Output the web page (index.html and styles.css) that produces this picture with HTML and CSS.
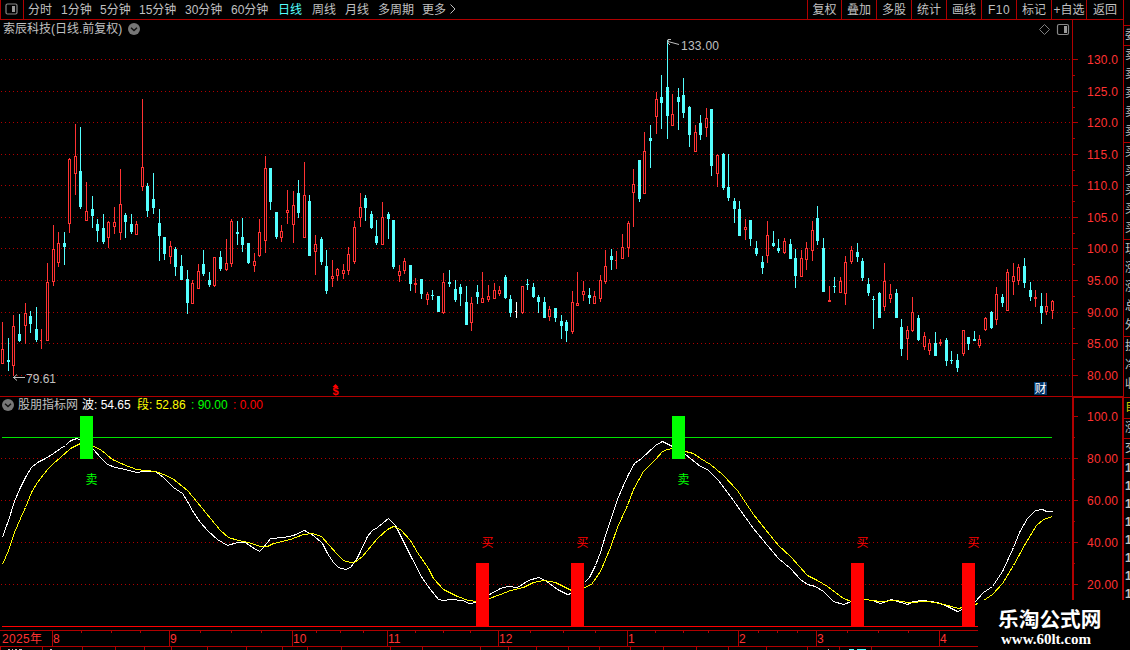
FILE: index.html
```html
<!DOCTYPE html>
<html lang="zh-CN">
<head>
    <meta charset="UTF-8">
    <meta name="viewport" content="width=device-width, initial-scale=1.0">
    <title>索辰科技 日线</title>
    <link rel="stylesheet" href="styles.css">
</head>
<body>
    <div class="terminal">
        <div class="main">
            <div class="toolbar">
                <div class="layout-btn">
                    <svg width="13" height="12" viewBox="0 0 13 12"><rect x="1" y="1" width="11" height="10" rx="1.5" fill="none" stroke="#888" stroke-width="1.2"/><rect x="7" y="3" width="3" height="6" fill="#999"/></svg>
                </div>
                <div class="periods">
                    <span class="w33">分时</span>
                    <span class="w39">1分钟</span>
                    <span class="w39">5分钟</span>
                    <span class="w46">15分钟</span>
                    <span class="w46">30分钟</span>
                    <span class="w47">60分钟</span>
                    <span class="w34 active">日线</span>
                    <span class="w33">周线</span>
                    <span class="w33">月线</span>
                    <span class="w44">多周期</span>
                    <span>更多</span>
                    <svg class="more" width="6" height="10" viewBox="0 0 6 10"><path d="M0.5 0.5 L5 5 L0.5 9.5" fill="none" stroke="#c0c0c0"/></svg>
                </div>
                <div class="tools">
                    <span class="first">复权</span>
                    <span>叠加</span>
                    <span>多股</span>
                    <span>统计</span>
                    <span>画线</span>
                    <span class="wide">F10</span>
                    <span>标记</span>
                    <span>+自选</span>
                    <span class="last">返回</span>
                </div>
            </div>

            <div class="panel price-panel">
                <div class="plot-col">
                    <div class="panel-head">
                        <span>索辰科技(日线.前复权)</span>
                        <svg class="drop" width="12" height="12" viewBox="0 0 12 12"><circle cx="6" cy="6" r="6" fill="#777"/><path d="M3 4.8 L6 7.6 L9 4.8" fill="none" stroke="#111" stroke-width="1.4"/></svg>
                        <svg class="head-icons" width="32" height="13" viewBox="0 0 32 13"><path d="M6.5 1.5 L11.5 6.5 L6.5 11.5 L1.5 6.5 Z" fill="none" stroke="#808080"/><rect x="19.5" y="1.5" width="11" height="10" rx="1.5" fill="none" stroke="#888" stroke-width="1.2"/><rect x="26" y="3" width="3" height="7" fill="#999"/></svg>
                    </div>
                    <svg id="price-plot" width="1072" height="359" viewBox="0 38 1072 359"></svg>
                </div>
                <svg id="price-axis" width="51" height="377" viewBox="1072 20 51 377"></svg>
            </div>

            <div class="panel ind-panel">
                <div class="plot-col">
                    <div class="panel-head ind-head">
                        <svg width="12" height="12" viewBox="0 0 12 12"><circle cx="6" cy="6" r="6" fill="#777"/><path d="M3 4.8 L6 7.6 L9 4.8" fill="none" stroke="#111" stroke-width="1.4"/></svg>
                        <span class="ind-name">股朋指标网</span>
                        <span class="ind-white">波: 54.65</span>
                        <span class="ind-yellow">段: 52.86</span>
                        <span class="ind-green">: 90.00</span>
                        <span class="ind-red">: 0.00</span>
                    </div>
                    <svg id="ind-plot" width="1072" height="216" viewBox="0 414 1072 216"></svg>
                </div>
                <svg id="ind-axis" width="51" height="233" viewBox="1072 397 51 233"></svg>
            </div>

            <svg id="time-axis" width="1123" height="20" viewBox="0 630 1123 20"></svg>
        </div>

        <div class="side">
            <div class="side-box s1"><span>委</span></div>
            <div class="side-box s2"><span>卖</span><span>卖</span><span>卖</span><span>卖</span><span>卖</span></div>
            <div class="side-box s2"><span>买</span><span>买</span><span>买</span><span>买</span><span>买</span></div>
            <div class="side-box s2"><span>现</span><span>涨</span><span>涨</span><span>总</span><span>外</span></div>
            <div class="side-box s3"><span>换</span><span>净</span><span>收</span></div>
            <div class="side-box s4 hot"><span>自</span></div>
            <div class="side-box s5"><span>涨</span></div>
            <div class="side-box s5"><span>交</span></div>
            <div class="side-box s6"><b>1</b><b>1</b><b>1</b><b>1</b><b>1</b><b>1</b><b>1</b><b>1</b></div>
        </div>

        <div class="watermark">
            <div class="wm-name">乐淘公式网</div>
            <div class="wm-url">www.60lt.com</div>
        </div>
    </div>

    <script src="chart.js"></script>
</body>
</html>
```
FILE: styles.css
```css
body {
    margin: 0;
    background: #000;
    color: #c0c0c0;
    font-family: "Liberation Sans", "Noto Sans CJK SC", sans-serif;
    font-size: 12px;
}

svg {
    display: block;
}

.terminal {
    position: relative;
    display: flex;
    width: 1130px;
    height: 650px;
    overflow: hidden;
    background: #000;
}

.main {
    width: 1123px;
}

/* top toolbar */
.toolbar {
    display: flex;
    box-sizing: border-box;
    height: 20px;
    line-height: 20px;
    border-bottom: 1px solid #b00000;
    white-space: nowrap;
}

.layout-btn {
    box-sizing: border-box;
    width: 24px;
    padding: 3px 0 0 4px;
    border-left: 1px solid #b00000;
    border-right: 1px solid #b00000;
}

.periods {
    display: flex;
    flex: 1;
    padding-left: 4px;
}

.w33 { width: 33px; }
.w34 { width: 34px; }
.w39 { width: 39px; }
.w44 { width: 44px; }
.w46 { width: 46px; }
.w47 { width: 47px; }

.active {
    color: #54ffff;
}

.more {
    margin: 4px 0 0 4px;
}

.tools {
    display: flex;
}

.tools span {
    box-sizing: border-box;
    width: 35px;
    height: 19px;
    border-left: 1px solid #b00000;
    text-align: center;
}

.tools .first {
    width: 34px;
}

.tools .last {
    width: 37px;
}

.tools .wide {
    letter-spacing: 0.5px;
}

/* chart panels */
.panel {
    display: flex;
}

.plot-col {
    width: 1072px;
}

.panel-head {
    display: flex;
    height: 18px;
    line-height: 19px;
    padding-left: 3px;
    white-space: nowrap;
}

.drop {
    margin: 3px 0 0 6px;
}

.head-icons {
    margin: 3px 2px 0 auto;
}

.ind-head {
    height: 17px;
    line-height: 17px;
    padding-left: 2px;
}

.ind-head svg {
    margin-top: 2px;
}

.ind-name {
    width: 64px;
    margin-left: 4px;
}

.ind-white { width: 55px; color: #fff; }
.ind-yellow { width: 54px; color: #ff0; }
.ind-green { width: 42px; color: #0f0; }
.ind-red { color: #f00; }

.axis-label {
    font-size: 12px;
    fill: #ff3232;
}

.grid-line {
    stroke: #b00000;
    stroke-dasharray: 1 3;
}

.frame {
    fill: #b00000;
}

.note {
    fill: #c0c0c0;
}

.curve {
    fill: none;
    stroke-width: 1;
    shape-rendering: crispEdges;
}

/* cut-off quote column */
.side {
    width: 7px;
    overflow: hidden;
    padding-top: 25px;
    box-sizing: border-box;
    background: linear-gradient(to right, #b00000 1px, #000 1px);
}

.side-box {
    box-sizing: border-box;
    border-top: 1px solid #b00000;
    padding-left: 2px;
    overflow: hidden;
}

.side-box span,
.side-box b {
    display: block;
    width: 12px;
    height: 19px;
    line-height: 19px;
}

.side-box b {
    height: 18px;
    line-height: 18px;
}

.s1 { height: 20px; }
.s2 { height: 97px; }
.s3 { height: 61px; }
.s4 { height: 21px; }
.s5 { height: 20px; }
.s6 { height: 150px; }

.hot {
    color: #c8c800;
}

.watermark {
    position: absolute;
    right: 0;
    bottom: 0;
    box-sizing: border-box;
    width: 152px;
    height: 50px;
    padding: 6px 0 0 20px;
    background: #000;
    color: #fff;
    white-space: nowrap;
}

.wm-name {
    font: bold 20.7px/25px "Noto Sans CJK SC", sans-serif;
}

.wm-url {
    padding-left: 3px;
    font: bold 15px/16px "Liberation Serif", serif;
}
```
FILE: chart.js
```js
const NS = 'http://www.w3.org/2000/svg';

// x, high, body top, body bottom, low, colour (r = up, c = down, w = flat)
const candles = `
2 322 349 364 364 r|8 338 360 362 371 c|13 315 326 366 376 r|19 314 334 341 342 c|25 303 313 326 344 r
30 311 316 324 333 c|36 307 329 340 342 c|41 329 340 341 349 r|47 263 282 341 341 r|53 225 249 282 286 r
58 232 243 263 267 r|64 232 243 247 265 c|69 158 159 224 233 r|75 124 156 174 195 r|80 127 171 207 209 c
86 182 211 221 221 r|92 196 209 216 228 c|97 219 224 231 242 c|103 214 228 242 244 c|108 221 222 238 248 r
114 207 222 227 234 r|120 169 204 233 240 r|125 213 215 222 238 c|131 214 224 232 234 c|136 221 224 235 235 r
142 99 167 187 191 r|147 183 186 211 217 c|153 173 199 208 214 c|159 209 223 236 261 c|164 237 237 254 260 c
170 241 246 257 264 r|175 247 249 267 276 c|181 255 266 280 280 c|187 270 279 303 314 c|192 280 283 304 304 r
198 264 271 289 289 r|203 250 264 274 276 c|209 272 280 285 287 c|214 257 257 286 287 r|220 251 257 269 271 c
226 239 263 270 271 r|231 219 221 264 267 r|237 221 232 234 245 c|242 218 237 245 252 c|248 243 243 263 264 c
254 253 261 266 272 r|259 219 232 256 257 r|265 156 168 241 253 r|270 168 168 202 210 c|276 212 212 237 239 c
281 225 231 238 242 r|287 190 210 213 224 r|293 191 205 225 243 r|298 180 193 213 218 c|304 162 195 238 238 r
309 195 201 256 256 c|315 235 244 252 275 r|321 237 239 262 265 c|326 250 266 291 294 c|332 260 276 279 287 r
337 268 269 276 281 r|343 264 270 274 279 r|348 247 254 271 275 r|354 221 227 262 264 r|360 193 207 218 227 r
365 195 198 208 221 c|371 211 214 228 229 c|376 220 236 243 245 c|382 202 217 245 245 r|388 212 214 219 239 c
393 220 220 267 269 c|399 265 271 276 282 r|404 258 261 271 274 r|410 265 265 284 291 c|415 278 283 285 293 r
421 279 279 294 299 c|427 292 294 300 305 r|432 290 295 296 300 c|438 296 296 312 312 c|443 273 282 313 314 r
449 270 282 284 287 c|455 280 289 300 302 c|460 284 287 294 306 c|466 286 302 325 325 c|471 297 303 323 331 r
477 285 292 297 304 c|482 272 298 303 303 r|488 285 296 300 302 r|494 283 290 299 299 r|499 286 290 294 296 r
505 275 277 298 299 c|510 295 299 313 317 c|516 302 311 312 318 w|522 286 286 313 314 r|527 279 284 285 290 c
533 283 287 297 298 c|538 295 297 302 313 c|544 297 302 318 318 c|549 306 309 317 321 r|555 308 308 318 322 c
561 315 321 326 339 c|566 320 322 331 342 c|572 291 302 332 334 r|577 272 303 306 306 r|583 281 291 295 301 r
589 288 295 298 304 c|594 291 296 304 304 r|600 275 280 299 302 r|605 250 266 282 284 r|611 249 256 260 270 c
616 251 260 261 269 r|622 234 247 259 259 r|628 221 223 248 257 r|633 169 184 193 227 r|639 160 160 199 202 c
644 132 151 194 194 r|650 125 138 141 168 c|656 92 99 117 134 r|661 75 97 103 129 c|667 40 87 116 139 c
672 94 114 126 126 r|678 88 97 102 130 c|683 78 95 113 118 c|689 106 107 135 147 c|695 125 132 152 152 r
700 115 123 135 140 c|706 108 118 128 137 r|711 109 109 166 176 c|717 154 155 174 187 r|723 153 154 188 190 c
728 154 187 198 201 c|734 198 201 209 223 c|739 201 209 236 236 c|745 219 227 230 240 r|750 220 220 239 246 c
756 241 248 254 256 c|762 256 262 268 274 c|767 221 235 256 263 r|773 231 243 246 247 c|778 239 248 251 253 c
784 238 241 253 254 r|790 239 244 259 259 c|795 249 258 276 288 c|801 250 258 277 277 r|806 242 248 260 270 r
812 221 230 251 261 r|817 206 218 241 245 c|823 238 248 292 292 c|829 286 300 302 302 r|834 277 286 287 293 c
840 277 281 293 293 r|845 256 262 294 305 r|851 246 250 262 264 r|857 243 252 257 262 c|862 258 261 278 281 c
868 278 284 293 296 c|873 296 299 300 329 c|879 292 293 318 318 c|884 263 281 307 311 r|890 284 294 299 303 r
896 289 293 318 318 c|901 319 327 349 356 c|907 326 330 339 360 r|912 297 312 331 332 r|918 315 318 340 341 c
924 332 336 347 350 r|929 339 343 351 355 r|935 332 343 356 356 c|940 339 342 344 346 r|946 338 340 361 366 c
951 351 360 361 364 c|957 354 360 368 372 c|963 330 330 354 356 r|968 337 337 344 350 c|974 331 339 341 341 c
979 335 339 346 348 r|985 317 318 330 331 r|991 311 312 328 329 c|996 287 294 320 325 r|1002 294 297 303 307 c
1007 269 272 311 311 r|1013 263 276 282 295 r|1018 264 267 281 285 r|1024 258 266 283 288 c|1030 282 290 297 301 c
1035 290 297 299 307 r|1041 293 306 313 324 c|1046 293 306 312 315 r|1052 300 301 311 319 r`;

const whiteLine = '2,537 5,528 8,520 14,501 20,487 25,477 31,467 37,462 45,458 53,453 60,448 65,445 69,441 73,439 77,438 80,440 93,449 100,457 107,464 115,467 125,469 136,472 143,471 155,471 163,477 173,487 182,493 187,501 193,512 200,522 208,531 217,539 227,545 237,542 245,542 252,547 259,551 263,547 270,538 283,537 293,535 304,530 313,535 322,543 327,553 333,562 338,567 345,569 350,567 356,559 360,551 367,536 372,530 377,527 388,518 395,525 400,535 410,555 422,578 430,589 438,599 443,600 450,599 462,600 469,603 476,602 489,594 500,588 507,586 517,587 528,580 538,577 545,580 557,589 567,594 571,593 584,582 589,577 595,565 600,552 605,535 617,499 622,487 628,474 634,463 641,458 655,445 662,441 672,446 685,454 700,466 707,469 718,480 733,500 740,510 753,528 767,545 778,558 790,568 800,579 807,584 815,586 823,591 833,601 843,604 851,601 864,599 872,600 880,603 891,599 907,604 913,601 923,600 937,602 947,606 957,611 962,609 975,601 983,592 992,586 1002,571 1013,547 1019,532 1027,518 1035,510 1042,509 1046,511 1052,511';
const yellowLine = '2,564 8,550 14,532 20,518 25,507 31,492 37,482 47,469 53,463 60,457 70,448 76,445 80,443 93,446 100,449 112,459 123,464 136,469 155,471 163,474 172,478 187,490 197,502 210,518 220,530 228,537 238,540 248,542 260,546 267,546 273,543 290,539 303,534 312,533 321,536 328,544 337,554 343,560 350,562 354,562 362,556 377,538 387,529 393,526 400,529 410,540 417,552 428,568 433,578 443,589 457,596 468,600 476,601 489,598 500,594 510,590 523,587 533,582 543,580 555,582 567,588 571,590 584,587 591,584 600,571 610,547 617,527 627,505 633,489 643,471 655,459 662,451 667,449 672,448 685,451 693,453 700,458 710,464 722,474 737,490 753,514 765,529 778,545 790,556 807,575 817,580 827,586 843,598 851,601 864,599 880,601 895,600 908,602 927,601 940,603 958,608 962,607 975,604 983,600 992,594 1002,583 1013,565 1025,543 1036,525 1043,519 1052,516';

function add(svg, tag, attrs, text) {
    const el = document.createElementNS(NS, tag);
    for (const key in attrs) el.setAttribute(key, attrs[key]);
    if (text) el.textContent = text;
    svg.appendChild(el);
    return el;
}

function rect(svg, x, y, width, height, fill) {
    add(svg, 'rect', fill ? { x, y, width, height, fill } : { x, y, width, height, class: 'frame' });
}

function gridLine(svg, y) {
    add(svg, 'line', { x1: 1, x2: 1072, y1: y + 0.5, y2: y + 0.5, class: 'grid-line' });
}

function label(svg, x, y, text, width) {
    add(svg, 'text', { x, y, textLength: width, class: 'axis-label' }, text);
}

// price panel
const price = document.getElementById('price-plot');
const priceAxis = document.getElementById('price-axis');
const priceRows = [[59, '130.0'], [91, '125.0'], [122, '120.0'], [154, '115.0'], [185, '110.0'], [217, '105.0'],
    [248, '100.0'], [280, '95.00'], [312, '90.00'], [343, '85.00'], [375, '80.00']];

rect(priceAxis, 1072, 20, 1, 377);
rect(priceAxis, 1072, 396, 51, 1);
rect(price, 0, 396, 1072, 1);
priceRows.forEach(([y, text], i) => {
    gridLine(price, y);
    rect(priceAxis, 1073, y, 5, 1);
    if (i < priceRows.length - 1) rect(priceAxis, 1073, y + 16, 2, 1);
    label(priceAxis, 1087, y + 5, text, 31);
});

const colors = { r: '#ff3232', c: '#54ffff', w: '#ffffff' };
candles.trim().split(/[|\n]/).forEach(row => {
    const parts = row.split(' ');
    const [x, high, top, bottom, low] = parts.map(Number);
    const color = colors[parts[5]];
    rect(price, x, high, 1, low - high, color);
    const height = bottom - top;
    rect(price, x - 1, top, height > 1 || parts[5] === 'c' ? 3 : 2, height, color);
    if (parts[5] === 'r' && height > 2) rect(price, x, top + 1, 1, height - 2, '#000');
});

add(price, 'path', { d: 'M13 377.5 H25 M17 374.5 L13.5 377.5 L17 380.5', fill: 'none', stroke: '#c0c0c0' });
add(price, 'text', { x: 26, y: 383, textLength: 30, class: 'note' }, '79.61');
add(price, 'path', { d: 'M668 41.5 L679 44.5 M671 39.5 H668 V43 L670 45', fill: 'none', stroke: '#c0c0c0' });
add(price, 'text', { x: 681, y: 50, textLength: 38, class: 'note' }, '133.00');
add(price, 'text', { x: 332.5, y: 395, 'font-size': 11, 'font-weight': 'bold', fill: '#f00' }, '$');
add(price, 'path', { d: 'M335.5 384 L338.5 387 H332.5 Z', fill: '#f00' });
rect(price, 1034, 382, 13, 13, '#003468');
add(price, 'text', { x: 1034.5, y: 393, fill: '#fff' }, '财');

// indicator panel
const ind = document.getElementById('ind-plot');
const indAxis = document.getElementById('ind-axis');

[458, 500, 542, 584].forEach(y => gridLine(ind, y));
rect(ind, 2, 437, 1050, 1, '#00e400');
rect(ind, 2, 626, 1050, 1, '#f00');
add(ind, 'polyline', { points: whiteLine, class: 'curve', stroke: '#fff', transform: 'translate(0.5 0.5)' });
add(ind, 'polyline', { points: yellowLine, class: 'curve', stroke: '#ff0', transform: 'translate(0.5 0.5)' });
[80, 672].forEach(x => {
    rect(ind, x, 416, 13, 43, '#0f0');
    add(ind, 'text', { x: x + 5.5, y: 484, fill: '#0f0' }, '卖');
});
[476, 571, 851, 962].forEach(x => {
    rect(ind, x, 563, 13, 64, '#f00');
    add(ind, 'text', { x: x + 5.5, y: 547, fill: '#f00' }, '买');
});

rect(indAxis, 1072, 397, 2, 233);
rect(indAxis, 1072, 397, 51, 1);
rect(indAxis, 1122, 397, 1, 233);
[[416, '100.0'], [458, '80.00'], [500, '60.00'], [542, '40.00'], [584, '20.00']].forEach(([y, text]) => {
    rect(indAxis, 1074, y, 4, 1);
    rect(indAxis, 1074, y + 21, 1, 1);
    label(indAxis, 1087, y + 5, text, 31);
});

// time axis
const time = document.getElementById('time-axis');
rect(time, 0, 630, 1123, 1);
rect(time, 0, 646, 1123, 1);
add(time, 'text', { x: 2, y: 643, textLength: 40, class: 'axis-label' }, '2025年');
[[52, '8'], [169, '9'], [292, '10'], [387, '11'], [498, '12'], [627, '1'], [738, '2'], [816, '3'], [939, '4']].forEach(([x, text]) => {
    rect(time, x, 630, 1, 16);
    add(time, 'text', { x: x + 1, y: 643, class: 'axis-label' }, text);
});
[81, 111, 140, 200, 231, 261, 316, 340, 363, 415, 443, 470, 530, 563, 595, 655, 683, 708, 758, 777, 797, 847, 878, 908]
    .forEach(x => rect(time, x, 631, 1, 2));
[0, 42, 82, 115, 144, 171, 207, 246, 282, 307, 341, 390, 422, 480, 508, 536, 568, 599, 630, 663, 696, 728, 766, 807, 839, 871]
    .forEach(x => rect(time, x, 647, 1, 3));
// tops of the tab row below
[[8, 2], [12, 1], [15, 2], [19, 3], [50, 2], [828, 1]].forEach(([x, w]) => rect(time, x, 649, w, 1, '#c0c0c0'));
rect(time, 849, 649, 5, 1, '#54ffff');
rect(time, 857, 649, 9, 1, '#54ffff');
```
